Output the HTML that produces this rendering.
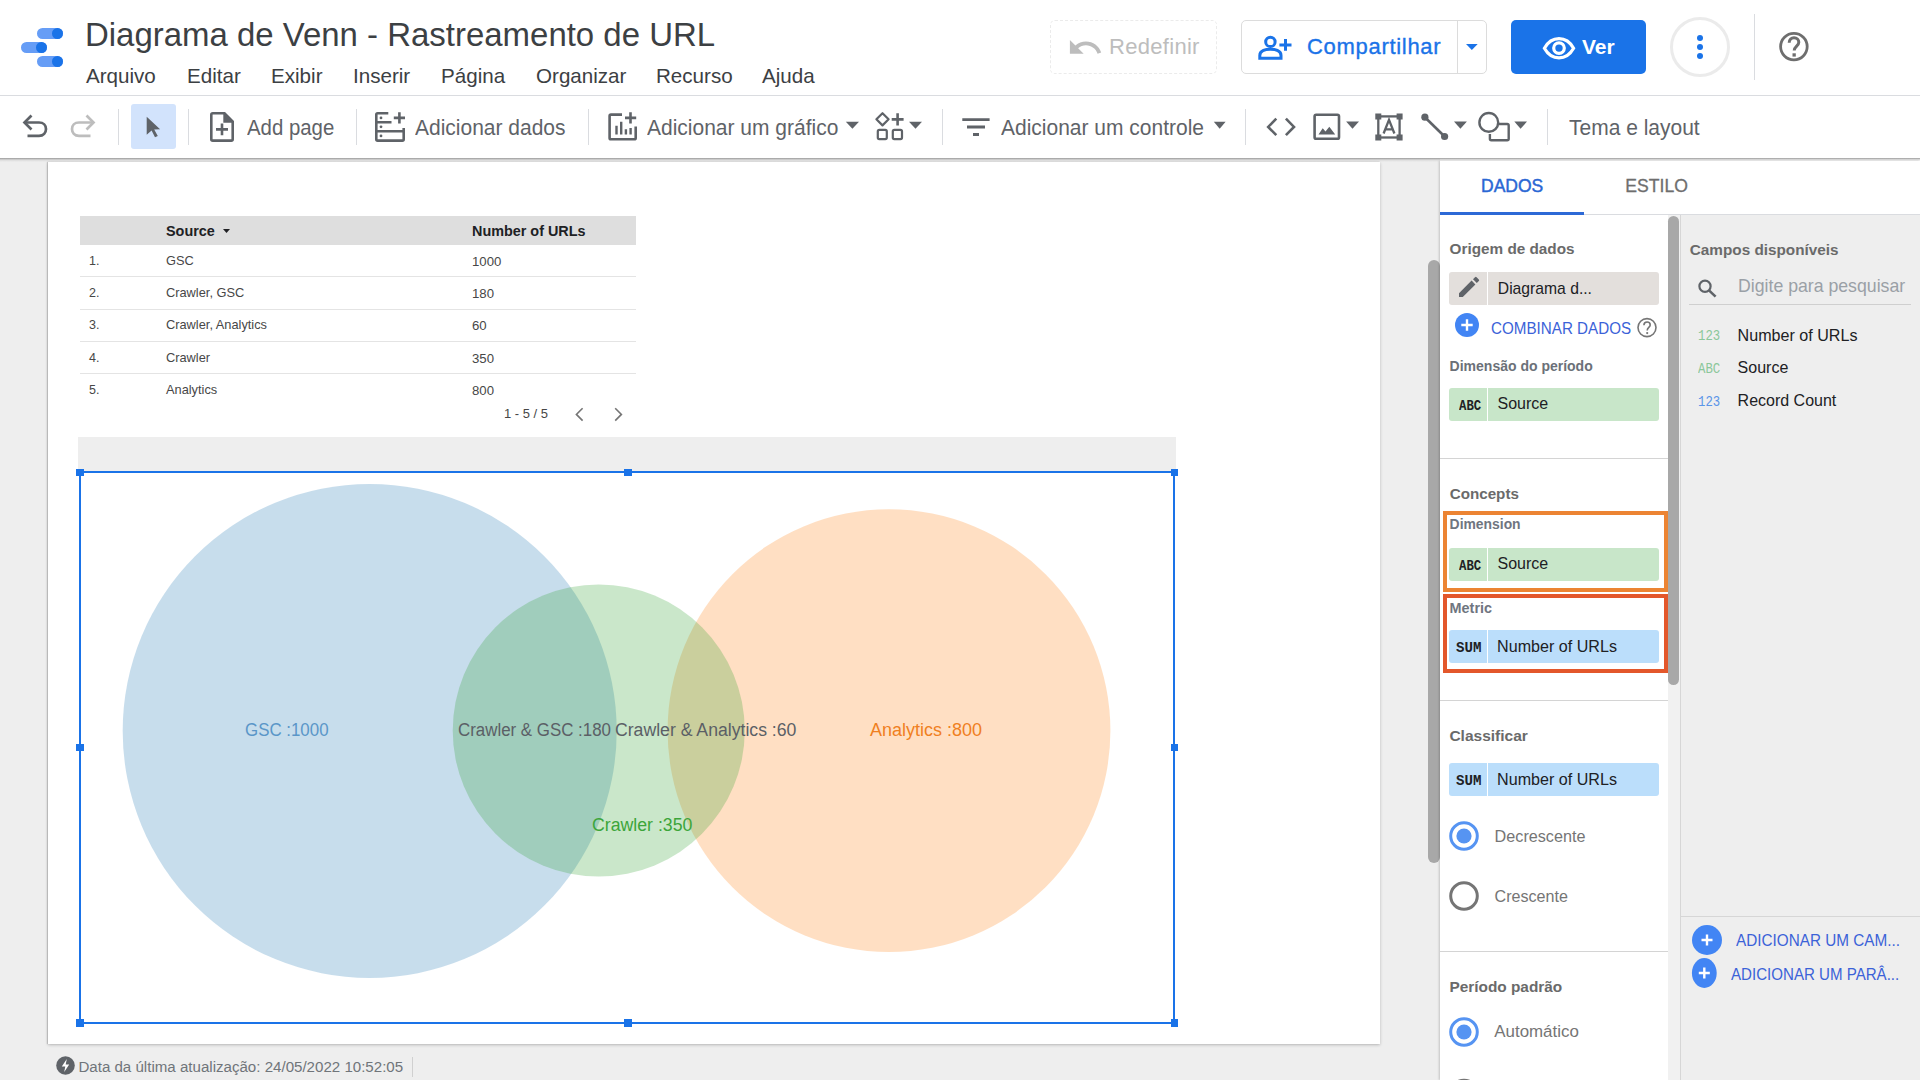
<!DOCTYPE html>
<html><head><meta charset="utf-8">
<style>
*{box-sizing:border-box;margin:0;padding:0}
html,body{width:1920px;height:1080px;overflow:hidden;background:#fff;font-family:"Liberation Sans",sans-serif}
.a{position:absolute}
.t{position:absolute;white-space:nowrap;line-height:1}
.sep{position:absolute;width:1px;background:#dadce0}
svg{position:absolute;overflow:visible}
</style></head><body>

<!-- HEADER -->
<div class="a" style="left:0;top:0;width:1920px;height:95px;background:#fff"></div>
<div class="a" style="left:0;top:95px;width:1920px;height:1px;background:#dadce0"></div>

<!-- logo -->
<div class="a" style="left:37px;top:27.6px;width:26px;height:11px;border-radius:6px;background:#669df6"></div>
<div class="a" style="left:52px;top:27.6px;width:11px;height:11px;border-radius:6px;background:#1a73e8"></div>
<div class="a" style="left:21px;top:41.6px;width:26px;height:11px;border-radius:6px;background:#669df6"></div>
<div class="a" style="left:36px;top:41.6px;width:11px;height:11px;border-radius:6px;background:#1a73e8"></div>
<div class="a" style="left:37px;top:55.6px;width:26px;height:11px;border-radius:6px;background:#669df6"></div>
<div class="a" style="left:52px;top:55.6px;width:11px;height:11px;border-radius:6px;background:#1a73e8"></div>

<div class="t" style="left:85px;top:17.9px;font-size:33.8px;color:#3c4043;transform:scaleX(0.975);transform-origin:0 0">Diagrama de Venn - Rastreamento de URL</div>
<div id="menu" style="font-size:20.6px;color:#3c4043">
<div class="t" style="left:86px;top:66.1px;font-size:20.6px">Arquivo</div>
<div class="t" style="left:187px;top:66.1px;font-size:20.6px">Editar</div>
<div class="t" style="left:271px;top:66.1px;font-size:20.6px">Exibir</div>
<div class="t" style="left:353px;top:66.1px;font-size:20.6px">Inserir</div>
<div class="t" style="left:441px;top:66.1px;font-size:20.6px">Página</div>
<div class="t" style="left:536px;top:66.1px;font-size:20.6px">Organizar</div>
<div class="t" style="left:656px;top:66.1px;font-size:20.6px">Recurso</div>
<div class="t" style="left:762px;top:66.1px;font-size:20.6px">Ajuda</div>
</div>

<!-- Redefinir -->
<div class="a" style="left:1050px;top:20px;width:167px;height:54px;border:1px dashed #ebebeb;border-radius:5px"></div>
<svg style="left:0;top:0" width="1200" height="80"><path transform="translate(1066.84,29.19) scale(1.53)" d="M12.5 8c-2.65 0-5.05.99-6.9 2.6L2 7v9h9l-3.62-3.62c1.39-1.16 3.16-1.88 5.12-1.88 3.54 0 6.55 2.31 7.6 5.5l2.370-.78C21.08 11.03 17.15 8 12.5 8z" fill="#bdbdbd"/></svg>
<div class="t" style="left:1109px;top:35.9px;font-size:22px;color:#bdbdbd;letter-spacing:0.3px">Redefinir</div>

<!-- Compartilhar -->
<div class="a" style="left:1241px;top:20px;width:246px;height:54px;border:1px solid #dcdcdc;border-radius:5px"></div>
<div class="a" style="left:1457px;top:21px;width:1px;height:52px;background:#dcdcdc"></div>
<div class="t" style="left:1307px;top:36.4px;font-size:22px;color:#1a73e8;letter-spacing:0.7px;-webkit-text-stroke:0.35px #1a73e8">Compartilhar</div>
<svg style="left:1465.6px;top:43.9px" width="12" height="6"><path d="M0 0 L11.7 0 L5.85 6 Z" fill="#1a73e8"/></svg>

<!-- Ver -->
<div class="a" style="left:1511px;top:20px;width:135px;height:54px;background:#1a73e8;border-radius:5px"></div>
<div class="t" style="left:1582px;top:35.9px;font-size:21px;font-weight:700;color:#fff">Ver</div>

<!-- kebab -->
<div class="a" style="left:1670px;top:17px;width:60px;height:60px;border:3px solid #ebebeb;border-radius:50%"></div>
<div class="a" style="left:1697px;top:35px;width:6px;height:6px;border-radius:50%;background:#1a73e8"></div>
<div class="a" style="left:1697px;top:44px;width:6px;height:6px;border-radius:50%;background:#1a73e8"></div>
<div class="a" style="left:1697px;top:52.5px;width:6px;height:6px;border-radius:50%;background:#1a73e8"></div>
<div class="a" style="left:1754px;top:14px;width:1px;height:66px;background:#dadce0"></div>

<!-- TOOLBAR -->
<div class="a" style="left:0;top:96px;width:1920px;height:62px;background:#fff"></div>


<div class="a" style="left:131px;top:104px;width:45px;height:45px;background:#d2e3fc;border-radius:3px"></div>
<div class="sep" style="left:118px;top:109px;height:36px"></div>
<div class="sep" style="left:188px;top:109px;height:36px"></div>
<div class="sep" style="left:356px;top:109px;height:36px"></div>
<div class="sep" style="left:588px;top:109px;height:36px"></div>
<div class="sep" style="left:942px;top:109px;height:36px"></div>
<div class="sep" style="left:1245px;top:109px;height:36px"></div>
<div class="sep" style="left:1547px;top:109px;height:36px"></div>
<div class="t" style="left:246.6px;top:116.66px;font-size:21.62px;color:#5f6368;transform:scaleX(0.9434);transform-origin:0 0">Add page</div>
<div class="t" style="left:415px;top:116.7px;font-size:22.26px;color:#5f6368;transform:scaleX(0.9434);transform-origin:0 0">Adicionar dados</div>
<div class="t" style="left:647px;top:116.7px;font-size:22.26px;color:#5f6368;transform:scaleX(0.9434);transform-origin:0 0">Adicionar um gráfico</div>
<div class="t" style="left:1000.5px;top:116.7px;font-size:22.26px;color:#5f6368;transform:scaleX(0.9434);transform-origin:0 0">Adicionar um controle</div>
<div class="t" style="left:1568.7px;top:116.7px;font-size:22.26px;color:#5f6368;transform:scaleX(0.9434);transform-origin:0 0">Tema e layout</div>

<!-- CANVAS -->
<div class="a" style="left:0;top:158px;width:1440px;height:922px;background:#eeeeee"></div>
<div class="a" style="left:0;top:158px;width:1920px;height:4px;background:linear-gradient(#9a9a9a,rgba(0,0,0,0.08),rgba(0,0,0,0))"></div>
<div class="a" style="left:48px;top:162px;width:1332px;height:882px;background:#fff;box-shadow:-1px 0 1px rgba(0,0,0,0.15),0 1px 3px rgba(0,0,0,0.22)"></div>


<!-- TABLE -->
<div class="a" style="left:80px;top:216px;width:556px;height:29px;background:#dedede"></div>
<div class="t" style="left:166px;top:224px;font-size:14.4px;font-weight:700;color:#202124">Source</div>
<svg style="left:223px;top:229px" width="7" height="4"><path d="M0 0 H7 L3.5 4 Z" fill="#202124"/></svg>
<div class="t" style="left:472px;top:224px;font-size:14.4px;font-weight:700;color:#202124">Number of URLs</div>
<div class="a" style="left:80px;top:276px;width:556px;height:1px;background:#e4e4e4"></div>
<div class="a" style="left:80px;top:309px;width:556px;height:1px;background:#e4e4e4"></div>
<div class="a" style="left:80px;top:341px;width:556px;height:1px;background:#e4e4e4"></div>
<div class="a" style="left:80px;top:373px;width:556px;height:1px;background:#e4e4e4"></div>
<div style="color:#474747">
<div class="t" style="left:89px;top:254.8px;font-size:12.5px">1.</div>
<div class="t" style="left:166px;top:254.8px;font-size:12.8px">GSC</div>
<div class="t" style="left:472px;top:254.8px;font-size:13.2px">1000</div>
<div class="t" style="left:89px;top:286.8px;font-size:12.5px">2.</div>
<div class="t" style="left:166px;top:286.8px;font-size:12.8px">Crawler, GSC</div>
<div class="t" style="left:472px;top:286.8px;font-size:13.2px">180</div>
<div class="t" style="left:89px;top:318.8px;font-size:12.5px">3.</div>
<div class="t" style="left:166px;top:318.8px;font-size:12.8px">Crawler, Analytics</div>
<div class="t" style="left:472px;top:318.8px;font-size:13.2px">60</div>
<div class="t" style="left:89px;top:351.8px;font-size:12.5px">4.</div>
<div class="t" style="left:166px;top:351.8px;font-size:12.8px">Crawler</div>
<div class="t" style="left:472px;top:351.8px;font-size:13.2px">350</div>
<div class="t" style="left:89px;top:383.8px;font-size:12.5px">5.</div>
<div class="t" style="left:166px;top:383.8px;font-size:12.8px">Analytics</div>
<div class="t" style="left:472px;top:383.8px;font-size:13.2px">800</div>
<div class="t" style="left:504px;top:407px;font-size:13px">1 - 5 / 5</div>
</div>
<svg style="left:0;top:0" width="1440" height="1080">
 <path d="M582.6 408.2 L576.4 414.4 L582.6 420.6" fill="none" stroke="#757575" stroke-width="1.6"/>
 <path d="M615.2 408.2 L621.4 414.4 L615.2 420.6" fill="none" stroke="#757575" stroke-width="1.6"/>
</svg>

<!-- gray header bar -->
<div class="a" style="left:78px;top:437px;width:1098px;height:35px;background:#eeeeee"></div>

<!-- VENN -->
<svg style="left:0;top:0" width="1440" height="1080">
 <circle cx="369.7" cy="730.9" r="247" fill="#1f77b4" fill-opacity="0.25"/>
 <circle cx="889" cy="730.7" r="221.4" fill="#ff7f0e" fill-opacity="0.25"/>
 <circle cx="598.75" cy="730.5" r="146" fill="#2ca02c" fill-opacity="0.25"/>
</svg>
<div class="t" style="left:245.2px;top:721.3px;font-size:18px;color:#5a96c8;transform:scaleX(0.938);transform-origin:0 0">GSC :1000</div>
<div class="t" style="left:458.3px;top:721.3px;font-size:18px;color:#5b5f66;transform:scaleX(0.938);transform-origin:0 0">Crawler &amp; GSC :180</div>
<div class="t" style="left:615.2px;top:721.3px;font-size:18px;color:#5b5f66;transform:scaleX(0.98);transform-origin:0 0">Crawler &amp; Analytics :60</div>
<div class="t" style="left:870px;top:721.3px;font-size:18px;color:#f0801f;transform:scaleX(1.0);transform-origin:0 0">Analytics :800</div>
<div class="t" style="left:592.4px;top:815.7px;font-size:18px;color:#3ca53a;transform:scaleX(0.984);transform-origin:0 0">Crawler :350</div>

<!-- selection -->
<div class="a" style="left:79px;top:471px;width:1096px;height:552.5px;border:2px solid #1a73e8"></div>
<div class="a" style="left:76.4px;top:468.8px;width:7.6px;height:7.2px;background:#1a73e8"></div>
<div class="a" style="left:76.4px;top:744.1px;width:7.6px;height:7.2px;background:#1a73e8"></div>
<div class="a" style="left:76.4px;top:1019.4px;width:7.6px;height:7.2px;background:#1a73e8"></div>
<div class="a" style="left:624px;top:468.8px;width:7.6px;height:7.2px;background:#1a73e8"></div>
<div class="a" style="left:624px;top:1019.4px;width:7.6px;height:7.2px;background:#1a73e8"></div>
<div class="a" style="left:1170.9px;top:468.8px;width:7.6px;height:7.2px;background:#1a73e8"></div>
<div class="a" style="left:1170.9px;top:744.1px;width:7.6px;height:7.2px;background:#1a73e8"></div>
<div class="a" style="left:1170.9px;top:1019.4px;width:7.6px;height:7.2px;background:#1a73e8"></div>

<!-- footer -->
<svg style="left:56px;top:1056px" width="19" height="19" viewBox="0 0 19 19">
 <circle cx="9.5" cy="9.5" r="9.3" fill="#5f6368"/>
 <path d="M10.8 3 L5.8 10.6 H9.3 L8.2 16 L13.2 8.4 H9.7 Z" fill="#fff"/>
</svg>
<div class="t" style="left:78.4px;top:1058.6px;font-size:15.1px;color:#70757a">Data da última atualização: 24/05/2022 10:52:05</div>
<div class="a" style="left:412px;top:1057px;width:1px;height:20px;background:#d0d0d0"></div>

<!-- canvas scrollbar -->
<div class="a" style="left:1428px;top:260px;width:12px;height:603px;background:#a8a8a8;border-radius:6px"></div>

<!-- RIGHT PANEL -->
<div class="a" style="left:1440px;top:161px;width:480px;height:919px;background:#fff;box-shadow:-1px 0 2px rgba(0,0,0,0.18)"></div>
<div class="t" style="left:1481px;top:177.94px;font-size:17.50px;color:#2a67d4;-webkit-text-stroke:0.45px #2a67d4">DADOS</div>
<div class="t" style="left:1625.3px;top:177.85px;font-size:17.60px;color:#6e6e6e;-webkit-text-stroke:0.3px #6e6e6e">ESTILO</div>
<div class="a" style="left:1440px;top:212px;width:144px;height:3px;background:#2d69d6"></div>
<div class="a" style="left:1584px;top:214px;width:336px;height:1px;background:#dadce0"></div>
<div class="t" style="left:1449.6px;top:241.45px;font-size:15.30px;font-weight:700;color:#6a6a6a;">Origem de dados</div>
<div class="a" style="left:1449px;top:272px;width:210px;height:33px;background:#e3dfdc;border-radius:3px"></div>
<div class="a" style="left:1487px;top:272px;width:1px;height:33px;background:#fff"></div>
<div class="t" style="left:1497.8px;top:280.71px;font-size:15.70px;color:#202124;">Diagrama d...</div>
<div class="t" style="left:1491.4px;top:319.85px;font-size:16.42px;color:#3b62d8;transform:scaleX(0.9259);transform-origin:0 0;">COMBINAR DADOS</div>
<div class="t" style="left:1449.6px;top:358.95px;font-size:14.00px;font-weight:700;color:#6b7078;">Dimensão do período</div>
<div class="a" style="left:1449px;top:388px;width:210px;height:33px;background:#c8e6c9;border-radius:3px"></div>
<div class="a" style="left:1487px;top:388px;width:1px;height:33px;background:#fff"></div>
<div class="t" style="left:1497.5px;top:395.76px;font-size:16.00px;color:#202124;">Source</div>
<div class="a" style="left:1440px;top:458px;width:228px;height:1px;background:#d4d4d4"></div>
<div class="t" style="left:1449.7px;top:485.83px;font-size:15.20px;font-weight:700;color:#6a6a6a;">Concepts</div>
<div class="a" style="left:1443px;top:511px;width:225px;height:81px;border:4px solid #ec8433"></div>
<div class="t" style="left:1449.6px;top:518.23px;font-size:13.90px;font-weight:700;color:#6f7580;">Dimension</div>
<div class="a" style="left:1449px;top:548px;width:210px;height:33px;background:#c8e6c9;border-radius:3px"></div>
<div class="a" style="left:1487px;top:548px;width:1px;height:33px;background:#fff"></div>
<div class="t" style="left:1497.5px;top:555.96px;font-size:16.00px;color:#202124;">Source</div>
<div class="a" style="left:1443px;top:594px;width:225px;height:79px;border:4px solid #e3572b"></div>
<div class="t" style="left:1449.6px;top:600.81px;font-size:14.40px;font-weight:700;color:#6f7580;">Metric</div>
<div class="a" style="left:1449px;top:630px;width:210px;height:33px;background:#bbdefb;border-radius:3px"></div>
<div class="a" style="left:1487px;top:630px;width:1px;height:33px;background:#fff"></div>
<div class="t" style="left:1497.1px;top:637.87px;font-size:16.10px;color:#202124;">Number of URLs</div>
<div class="a" style="left:1440px;top:700px;width:228px;height:1px;background:#d4d4d4"></div>
<div class="t" style="left:1449.4px;top:727.98px;font-size:15.50px;font-weight:700;color:#6a6a6a;">Classificar</div>
<div class="a" style="left:1449px;top:763px;width:210px;height:33px;background:#bbdefb;border-radius:3px"></div>
<div class="a" style="left:1487px;top:763px;width:1px;height:33px;background:#fff"></div>
<div class="t" style="left:1497.1px;top:770.87px;font-size:16.10px;color:#202124;">Number of URLs</div>
<div class="t" style="left:1494.6px;top:828.49px;font-size:16.20px;color:#757575;">Decrescente</div>
<div class="t" style="left:1494.6px;top:887.77px;font-size:16.10px;color:#757575;">Crescente</div>
<div class="a" style="left:1440px;top:951px;width:228px;height:1px;background:#d4d4d4"></div>
<div class="t" style="left:1449.4px;top:979.06px;font-size:15.40px;font-weight:700;color:#6a6a6a;">Período padrão</div>
<div class="t" style="left:1494.3px;top:1023.89px;font-size:16.90px;color:#757575;">Automático</div>
<div class="a" style="left:1680px;top:215px;width:240px;height:865px;background:#eeeeee;border-left:1px solid #d6d6d6"></div>
<div class="t" style="left:1689.8px;top:241.65px;font-size:15.30px;font-weight:700;color:#6a6a6a;">Campos disponíveis</div>
<div class="t" style="left:1738px;top:277.62px;font-size:17.70px;color:#9aa0a6;">Digite para pesquisar</div>
<div class="a" style="left:1689px;top:304px;width:222px;height:1px;background:#cfcfcf"></div>
<div class="t" style="left:1737.6px;top:327.07px;font-size:16.10px;color:#202124;">Number of URLs</div>
<div class="t" style="left:1737.6px;top:359.56px;font-size:16.00px;color:#202124;">Source</div>
<div class="t" style="left:1737.6px;top:392.96px;font-size:16.00px;color:#202124;">Record Count</div>
<div class="a" style="left:1680px;top:916px;width:240px;height:1px;background:#d6d6d6"></div>
<div class="t" style="left:1735.8px;top:933.21px;font-size:16.52px;color:#3b62d8;transform:scaleX(0.9259);transform-origin:0 0;">ADICIONAR UM CAM...</div>
<div class="t" style="left:1731.4px;top:965.95px;font-size:16.31px;color:#3b62d8;transform:scaleX(0.9259);transform-origin:0 0;">ADICIONAR UM PARÂ...</div>
<div class="t" style="left:1458.6px;top:398.70px;font-family:'Liberation Mono',monospace;font-size:15px;font-weight:700;color:#202124;transform:scaleX(0.82);transform-origin:0 0">ABC</div>
<div class="t" style="left:1458.6px;top:559.00px;font-family:'Liberation Mono',monospace;font-size:15px;font-weight:700;color:#202124;transform:scaleX(0.82);transform-origin:0 0">ABC</div>
<div class="t" style="left:1456px;top:640.90px;font-family:'Liberation Mono',monospace;font-size:15px;font-weight:700;color:#202124;transform:scaleX(0.94);transform-origin:0 0">SUM</div>
<div class="t" style="left:1456px;top:773.90px;font-family:'Liberation Mono',monospace;font-size:15px;font-weight:700;color:#202124;transform:scaleX(0.94);transform-origin:0 0">SUM</div>
<div class="t" style="left:1698.3px;top:328.70px;font-family:'Liberation Mono',monospace;font-size:15px;font-weight:400;color:#8bc79a;transform:scaleX(0.82);transform-origin:0 0">123</div>
<div class="t" style="left:1698.3px;top:361.90px;font-family:'Liberation Mono',monospace;font-size:15px;font-weight:400;color:#8bc79a;transform:scaleX(0.82);transform-origin:0 0">ABC</div>
<div class="t" style="left:1698.3px;top:395.40px;font-family:'Liberation Mono',monospace;font-size:15px;font-weight:400;color:#5a95e8;transform:scaleX(0.82);transform-origin:0 0">123</div>
<div class="a" style="left:1668px;top:215px;width:12px;height:865px;background:#f1f1f1"></div>
<div class="a" style="left:1668px;top:216px;width:11px;height:469px;background:#a8a8a8;border-radius:6px"></div>
<svg style="left:0;top:0" width="1920" height="1080">
 <!-- pencil -->
 <path d="M1459 297 V293.2 L1471.6 280.6 L1475.4 284.4 L1462.8 297 Z M1473 279.2 L1475 277.2 Q1475.8 276.4 1476.6 277.2 L1478.8 279.4 Q1479.6 280.2 1478.8 281 L1476.8 283 Z" fill="#5f6368"/>
 <!-- combinar -->
 <circle cx="1467" cy="325" r="12" fill="#4285f4"/>
 <path d="M1467 319.3 V330.7 M1461.3 325 H1472.7" stroke="#fff" stroke-width="2.4"/>
 <circle cx="1647" cy="327.6" r="9" fill="none" stroke="#757575" stroke-width="1.6"/>
 <path d="M1643.9 325.3 C1643.9 323.2 1645.3 322 1647.1 322 C1648.9 322 1650.2 323.3 1650.2 324.9 C1650.2 327.3 1647.2 327.5 1647.2 330.4" fill="none" stroke="#757575" stroke-width="1.6"/>
 <circle cx="1647.2" cy="333.1" r="1.1" fill="#757575"/>
 <!-- radios -->
 <circle cx="1464" cy="836" r="13.3" fill="none" stroke="#5694f2" stroke-width="3"/>
 <circle cx="1464" cy="836" r="7.6" fill="#5694f2"/>
 <circle cx="1464" cy="896" r="13.3" fill="none" stroke="#757575" stroke-width="3"/>
 <circle cx="1464" cy="1032" r="13.3" fill="none" stroke="#5694f2" stroke-width="3"/>
 <circle cx="1464" cy="1032" r="7.6" fill="#5694f2"/>
 <circle cx="1464" cy="1093.5" r="13.3" fill="none" stroke="#757575" stroke-width="3"/>
 <!-- search -->
 <circle cx="1705" cy="286.3" r="5.6" fill="none" stroke="#5f6368" stroke-width="2.2"/>
 <path d="M1709 290.4 L1715.6 296.6" stroke="#5f6368" stroke-width="2.6"/>
 <!-- add circles -->
 <ellipse cx="1707" cy="940" rx="15" ry="15" fill="#4285f4"/>
 <path d="M1707 934.5 V945.5 M1701.5 940 H1712.5" stroke="#fff" stroke-width="2.4"/>
 <ellipse cx="1704.3" cy="973" rx="12.4" ry="15" fill="#4285f4"/>
 <path d="M1704.3 967.5 V978.5 M1698.8 973 H1709.8" stroke="#fff" stroke-width="2.4"/>
</svg>

<!-- header+toolbar icon overlay -->
<svg style="left:0;top:0" width="1920" height="160" viewBox="0 0 1920 160">
 <!-- share icon -->
 <g fill="none" stroke="#1a73e8" stroke-width="3">
  <circle cx="1270.4" cy="41.9" r="4.7"/>
  <path d="M1259.8 58.3 V55.5 C1259.8 50.5 1266 49.2 1270.4 49.2 C1274.8 49.2 1281 50.5 1281 55.5 V58.3 Z"/>
  <path d="M1285.5 39 V50.8 M1279.4 45 H1291.5"/>
 </g>
 <!-- eye -->
 <g fill="none" stroke="#fff" stroke-width="3.2">
  <path d="M1544.4 48.2 C1549 40 1554 38.6 1559 38.6 C1564 38.6 1569 40 1573.6 48.2 C1569 56.4 1564 57.8 1559 57.8 C1554 57.8 1549 56.4 1544.4 48.2 Z"/>
  <circle cx="1559" cy="48.1" r="5.3"/>
 </g>
 <!-- help -->
 <circle cx="1793.9" cy="46.6" r="13.3" fill="none" stroke="#6e6e6e" stroke-width="2.8"/>
 <path d="M1789.2 42.8 C1789.2 39.6 1791.3 37.8 1794 37.8 C1796.8 37.8 1798.8 39.8 1798.8 42.3 C1798.8 45.9 1794.2 46.3 1794.2 50.6" fill="none" stroke="#6e6e6e" stroke-width="3"/>
 <rect x="1792.5" y="53.3" width="3.3" height="3.3" fill="#6e6e6e"/>
 <!-- undo -->
 <g fill="none" stroke="#5f6368" stroke-width="2.7" stroke-linecap="butt">
  <path d="M31.5 115.5 L24.5 122.5 L31.5 129.5"/>
  <path d="M24.5 122.5 H39 C43.5 122.5 46 125.5 46 129 C46 132.5 43.5 135.8 39 135.8 H27.5"/>
 </g>
 <g fill="none" stroke="#bdbdbd" stroke-width="2.7">
  <path d="M86.5 115.5 L93.5 122.5 L86.5 129.5"/>
  <path d="M93.5 122.5 H79 C74.5 122.5 72 125.5 72 129 C72 132.5 74.5 135.8 79 135.8 H90.5"/>
 </g>
 <!-- cursor -->
 <path d="M146.7 116.8 L160.1 129.2 L154.2 129.6 L157.8 136 L155 137.2 L151.6 130.6 L146.7 134.8 Z" fill="#5f6368"/>
 <!-- add page -->
 <g fill="none" stroke="#5f6368" stroke-width="2.6">
  <path d="M224.5 113.3 H212.8 Q211.3 113.3 211.3 114.8 V139.3 Q211.3 140.6 212.8 140.6 H231.3 Q232.7 140.6 232.7 139.3 V121.5 Z"/>
  <path d="M222 123.5 V135.3 M216 129.4 H228"/>
 </g>
 <path d="M223.3 112 L234 122.7 L223.3 122.7 Z" fill="#5f6368"/>
 <!-- adicionar dados -->
 <g fill="none" stroke="#5f6368" stroke-width="2.6">
  <path d="M388.3 113.3 H377.6 Q376.3 113.3 376.3 114.6 V139.3 Q376.3 140.6 377.6 140.6 H402.4 Q403.7 140.6 403.7 139.3 V128"/>
  <path d="M376.3 122.2 H391.5 M376.3 131.3 H403.7"/>
  <path d="M399.4 112.3 V123.5 M393.8 117.9 H405"/>
 </g>
 <circle cx="381" cy="117.9" r="1.4" fill="#5f6368"/>
 <circle cx="381" cy="126.8" r="1.4" fill="#5f6368"/>
 <circle cx="381" cy="135.9" r="1.4" fill="#5f6368"/>
 <!-- chart -->
 <g fill="none" stroke="#5f6368" stroke-width="2.6">
  <path d="M622 114.6 H611 Q609.6 114.6 609.6 116 V137.9 Q609.6 139.2 611 139.2 H634.3 Q635.7 139.2 635.7 137.9 V126.5"/>
  <path d="M630.5 112.3 V123.5 M625 117.9 H636.2"/>
 </g>
 <path d="M615.3 125.8 h2.4 v8.6 h-2.4 Z M620 121.7 h2.4 v12.7 h-2.4 Z M624.7 129.2 h2.4 v5.2 h-2.4 Z M629.4 128 h2.4 v6.4 h-2.4 Z" fill="#5f6368"/>
 <!-- community -->
 <g fill="none" stroke="#5f6368" stroke-width="2.2">
  <path d="M882.5 113.2 L888.6 119.3 L882.5 125.4 L876.4 119.3 Z" stroke-linejoin="round"/>
  <rect x="877.8" y="129.9" width="9" height="9.2" rx="1.5"/>
  <rect x="892.8" y="129.9" width="9.2" height="9.2" rx="1.5"/>
  <path d="M897.6 113.2 V125.4 M891.7 119.4 H903.6" stroke-width="2.6"/>
 </g>
 <!-- filter -->
 <path d="M962.3 118.2 h27.3 v2.7 h-27.3 Z M967 125.4 h18 v3 h-18 Z M973 132.9 h6 v3 h-6 Z" fill="#5f6368"/>
 <!-- embed <> -->
 <g fill="none" stroke="#5f6368" stroke-width="2.6">
  <path d="M1276.3 118.6 L1268.2 126.9 L1276.3 135.2"/>
  <path d="M1285.9 118.6 L1294 126.9 L1285.9 135.2"/>
 </g>
 <!-- image -->
 <rect x="1314.6" y="114.7" width="24.4" height="24.1" rx="1.6" fill="none" stroke="#5f6368" stroke-width="2.6"/>
 <path d="M1318.5 134.6 L1322.7 128.3 L1325.5 131.5 L1329.3 126.8 L1335.2 134.6 Z" fill="#5f6368"/>
 <!-- text box -->
 <g fill="none" stroke="#5f6368" stroke-width="2.3">
  <rect x="1378.3" y="116.4" width="21.3" height="21.1"/>
  <path d="M1383.6 133.5 L1389 119.8 L1394.4 133.5 M1385.2 129.4 H1392.8"/>
 </g>
 <path d="M1375.3 113.4 h6 v6 h-6 Z M1396.6 113.4 h6 v6 h-6 Z M1375.3 134.5 h6 v6 h-6 Z M1396.6 134.5 h6 v6 h-6 Z" fill="#5f6368"/>
 <!-- line -->
 <path d="M1424.9 117.2 L1444.6 136.5" stroke="#5f6368" stroke-width="2.6"/>
 <circle cx="1424.9" cy="117.2" r="3.6" fill="#5f6368"/>
 <circle cx="1444.6" cy="136.5" r="3.6" fill="#5f6368"/>
 <!-- shapes -->
 <g fill="none" stroke="#5f6368" stroke-width="2.4">
  <circle cx="1488.8" cy="122.4" r="9.4"/>
  <path d="M1497.5 124 H1507.2 Q1508.7 124 1508.7 125.5 V138.8 Q1508.7 140.3 1507.2 140.3 H1491.3 Q1489.9 140.3 1489.9 138.8 V134"/>
 </g>
 <!-- dropdown triangles -->
 <g fill="#5f6368">
  <path d="M845.8 121.8 H859 L852.4 128.8 Z"/>
  <path d="M909 121.8 H922 L915.5 128.8 Z"/>
  <path d="M1213.8 121.8 H1225.6 L1219.7 128.8 Z"/>
  <path d="M1346.1 121.6 H1359 L1352.5 128.7 Z"/>
  <path d="M1454 121.6 H1466.9 L1460.4 128.7 Z"/>
  <path d="M1514.3 121.6 H1527 L1520.6 128.7 Z"/>
 </g>
</svg>
</body></html>
